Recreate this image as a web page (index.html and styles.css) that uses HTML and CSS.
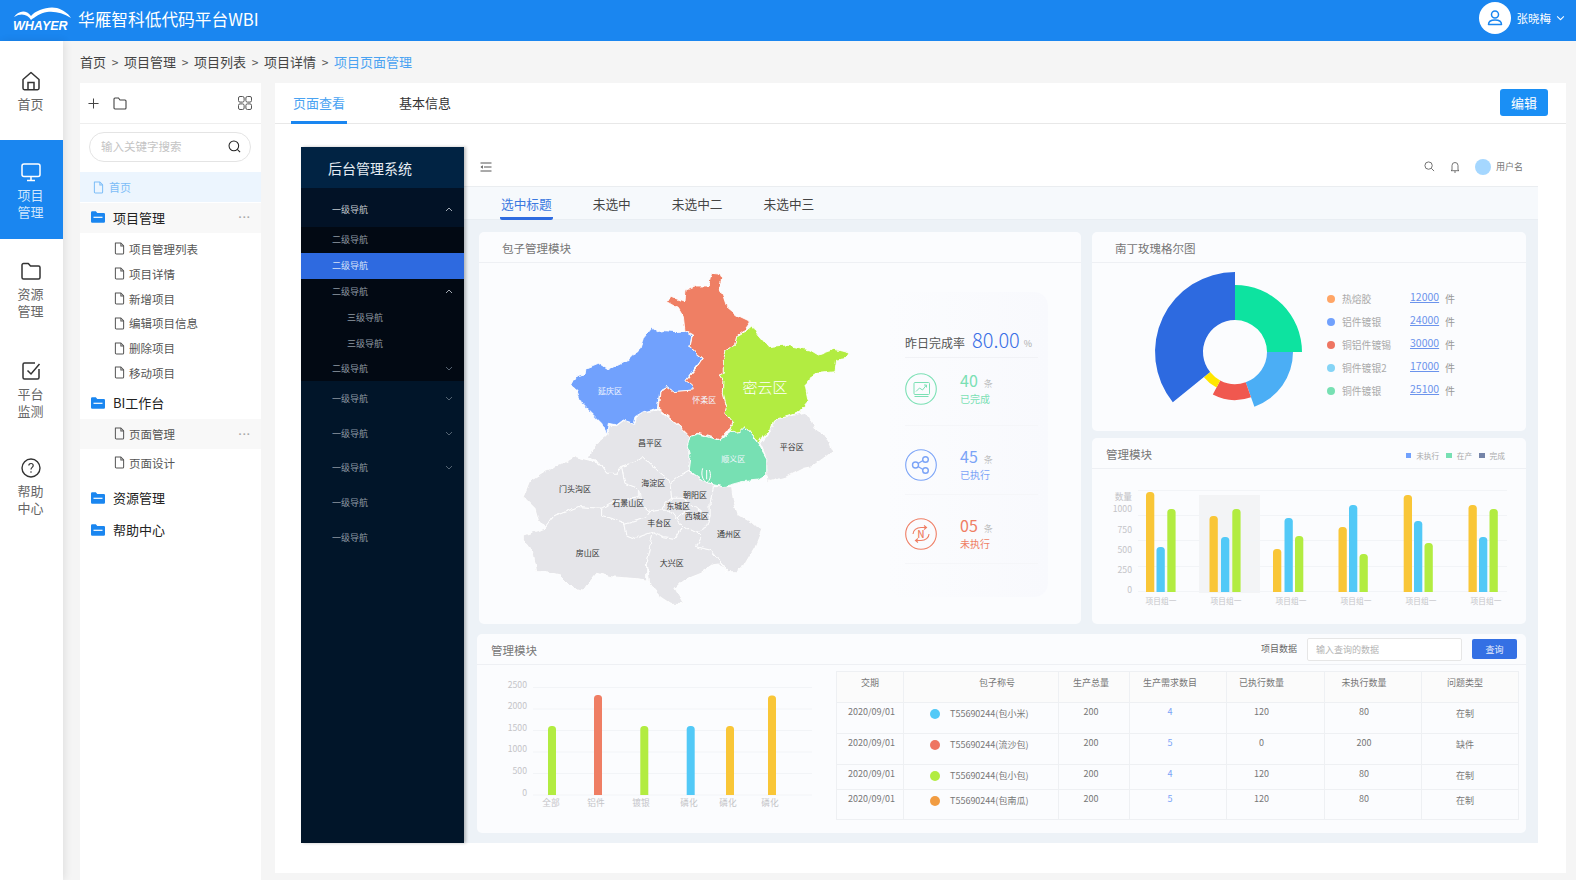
FILE: index.html
```html
<!DOCTYPE html>
<html lang="zh-CN">
<head>
<meta charset="utf-8">
<title>华雁智科低代码平台WBI</title>
<link rel="stylesheet" href="styles.css">
</head>
<body>
<svg class="sprite" aria-hidden="true">
  <defs>
    <symbol id="doc" viewBox="0 0 12 14"><path d="M1.5 1h6l3 3.2v7.6a1.2 1.2 0 0 1-1.2 1.2H2.7a1.2 1.2 0 0 1-1.2-1.2z" fill="none" stroke="currentColor" stroke-width="1.1" stroke-linejoin="round"/><path d="M7.5 1v3.2h3" fill="none" stroke="currentColor" stroke-width="1.1"/></symbol>
    <symbol id="bluefolder" viewBox="0 0 14 12"><path d="M0 1.5A1.2 1.2 0 0 1 1.2.3h3.6l1.5 1.6h6.5A1.2 1.2 0 0 1 14 3.1v7.4a1.2 1.2 0 0 1-1.2 1.2H1.2A1.2 1.2 0 0 1 0 10.500z" fill="#1a86f0"/><path d="M2.500 6.300h9" stroke="#fff" stroke-width="1.200"/></symbol>
    <symbol id="down" viewBox="0 0 8 5"><path d="M1 1l3 3 3-3" fill="none" stroke="currentColor" stroke-width="0.9"/></symbol>
    <symbol id="up" viewBox="0 0 8 5"><path d="M1 4l3-3 3 3" fill="none" stroke="currentColor" stroke-width="0.9"/></symbol>
    <filter id="rough" x="-5%" y="-5%" width="110%" height="110%" color-interpolation-filters="sRGB">
      <feTurbulence type="fractalNoise" baseFrequency="0.045" numOctaves="2" seed="4" result="n"/>
      <feDisplacementMap in="SourceGraphic" in2="n" scale="14" xChannelSelector="R" yChannelSelector="G"/>
    </filter>
  </defs>
</svg>

<div class="app">
  <header class="topbar">
    <div class="brand">
      <svg class="logo" viewBox="0 0 58 28" width="58" height="28">
        <path d="M1 10C5 4 13 2 18 9 23 3 35-1 44 1 50 3 55 6 58 11 50 6 42 4 34 5 27 6 22 10 18 13 15 8 9 5 1 10Z" fill="#fff"/>
        <text class="logo-text" x="0" y="23">WHAYER</text>
      </svg>
      <span class="brand-name">华雁智科低代码平台WBI</span>
    </div>
    <div class="user">
      <span class="user-avatar">
        <svg viewBox="0 0 20 20" width="20" height="20"><circle cx="10" cy="6.500" r="3.500" fill="none" stroke="#1a86f0" stroke-width="1.500"/><path d="M3.500 16.500c0-3 2.500-4.500 6.500-4.500s6.500 1.500 6.500 4.500z" fill="none" stroke="#1a86f0" stroke-width="1.500" stroke-linejoin="round"/></svg>
      </span>
      <span class="user-name">张晓梅</span>
      <svg class="user-caret" viewBox="0 0 8 5" width="9" height="6"><use href="#down"/></svg>
    </div>
  </header>

  <div class="below">
    <nav class="rail">
      <a class="rail-item rail-single">
        <svg viewBox="0 0 20 20" width="20" height="20"><path d="M10 1.500 2 8.500v8.800c0 .8.600 1.400 1.400 1.400h13.200c.8 0 1.400-.6 1.400-1.400V8.500z" fill="none" stroke="#333" stroke-width="1.500" stroke-linejoin="round"/><path d="M7 18.500v-7h6v7" fill="none" stroke="#333" stroke-width="1.500"/></svg>
        <span>首页</span>
      </a>
      <a class="rail-item rail-active">
        <svg viewBox="0 0 20 20" width="20" height="20"><rect x="1" y="2" width="18" height="12.500" rx="2" fill="none" stroke="#fff" stroke-width="1.500"/><path d="M10 14.500v3.500M6 18.500h8" stroke="#fff" stroke-width="1.500"/></svg>
        <span>项目<br>管理</span>
      </a>
      <a class="rail-item rail-tall">
        <svg viewBox="0 0 20 20" width="20" height="20"><path d="M1 4a1.500 1.500 0 0 1 1.500-1.500h4.800L9.500 5h8A1.500 1.500 0 0 1 19 6.500v10a1.500 1.500 0 0 1-1.500 1.500h-15A1.500 1.500 0 0 1 1 16.500z" fill="none" stroke="#333" stroke-width="1.500" stroke-linejoin="round"/></svg>
        <span>资源<br>管理</span>
      </a>
      <a class="rail-item">
        <svg viewBox="0 0 20 20" width="20" height="20"><path d="M18 8v8.500a1.500 1.500 0 0 1-1.500 1.500h-13A1.500 1.500 0 0 1 2 16.500v-13A1.500 1.500 0 0 1 3.500 2H14" fill="none" stroke="#333" stroke-width="1.500"/><path d="M6.500 9.500 10 13l8.500-10" fill="none" stroke="#333" stroke-width="1.500"/></svg>
        <span>平台<br>监测</span>
      </a>
      <a class="rail-item rail-help">
        <svg viewBox="0 0 20 20" width="20" height="20"><circle cx="10" cy="10" r="9" fill="none" stroke="#333" stroke-width="1.400"/><path d="M7.800 7.600c0-1.300 1-2.100 2.200-2.100s2.200.8 2.200 2c0 1.800-2.200 1.900-2.200 3.900" fill="none" stroke="#333" stroke-width="1.200"/><circle cx="10" cy="14" r=".8" fill="#333"/></svg>
        <span>帮助<br>中心</span>
      </a>
    </nav>

    <div class="content">
      <div class="crumbs">
        <span>首页</span><i>&gt;</i><span>项目管理</span><i>&gt;</i><span>项目列表</span><i>&gt;</i><span>项目详情</span><i>&gt;</i><span class="crumb-now">项目页面管理</span>
      </div>

      <div class="panels">
        <aside class="tree">
          <div class="tree-tools">
            <svg viewBox="0 0 12 12" width="11" height="11"><path d="M6 .5v11M.5 6h11" stroke="#444" stroke-width="1.100"/></svg>
            <svg class="tool-folder" viewBox="0 0 14 13" width="14" height="13"><path d="M1 2a1 1 0 0 1 1-1h3.500L7 3h5a1 1 0 0 1 1 1v7a1 1 0 0 1-1 1H2a1 1 0 0 1-1-1z" fill="none" stroke="#444" stroke-width="1.100"/></svg>
            <svg class="tool-grid" viewBox="0 0 14 14" width="14" height="14"><g fill="none" stroke="#555" stroke-width="1"><rect x=".5" y=".5" width="5.600" height="5.600" rx="1.500"/><rect x="7.900" y=".5" width="5.600" height="5.600" rx="1.500"/><rect x=".5" y="7.900" width="5.600" height="5.600" rx="1.500"/><rect x="7.900" y="7.900" width="5.600" height="5.600" rx="1.500"/></g></svg>
          </div>
          <div class="tree-search">
            <div class="pill">
              <span>输入关键字搜索</span>
              <svg viewBox="0 0 14 14" width="13" height="13"><circle cx="6.300" cy="6.300" r="5.200" fill="none" stroke="#222" stroke-width="1.100"/><path d="M10 10l3 3" stroke="#222" stroke-width="1.100"/></svg>
            </div>
          </div>
          <div class="t-home"><svg width="11" height="13"><use href="#doc"/></svg><span>首页</span></div>
          <div class="t-group t-group-on"><svg width="14" height="12"><use href="#bluefolder"/></svg><span>项目管理</span><b class="dots">···</b></div>
          <ul class="t-list">
            <li><svg width="11" height="13"><use href="#doc"/></svg>项目管理列表</li>
            <li><svg width="11" height="13"><use href="#doc"/></svg>项目详情</li>
            <li><svg width="11" height="13"><use href="#doc"/></svg>新增项目</li>
            <li><svg width="11" height="13"><use href="#doc"/></svg>编辑项目信息</li>
            <li><svg width="11" height="13"><use href="#doc"/></svg>删除项目</li>
            <li><svg width="11" height="13"><use href="#doc"/></svg>移动项目</li>
          </ul>
          <div class="t-group t-group-bi"><svg width="14" height="12"><use href="#bluefolder"/></svg><span>BI工作台</span></div>
          <div class="t-leaf t-leaf-on"><svg width="11" height="13"><use href="#doc"/></svg>页面管理<b class="dots">···</b></div>
          <div class="t-leaf"><svg width="11" height="13"><use href="#doc"/></svg>页面设计</div>
          <div class="t-group t-group-res"><svg width="14" height="12"><use href="#bluefolder"/></svg><span>资源管理</span></div>
          <div class="t-group t-group-help"><svg width="14" height="12"><use href="#bluefolder"/></svg><span>帮助中心</span></div>
        </aside>

        <main class="page">
          <div class="page-tabs">
            <a class="page-tab page-tab-on">页面查看</a>
            <a class="page-tab">基本信息</a>
            <button class="edit-btn">编辑</button>
          </div>

          <div class="frame">
            <div class="side">
              <div class="side-title">后台管理系统</div>
              <div class="side-row side-l1-open">一级导航<svg class="bright" width="8" height="5"><use href="#up"/></svg></div>
              <div class="side-sub">
                <div class="side-row side-l2">二级导航</div>
                <div class="side-row side-l2 side-on">二级导航</div>
                <div class="side-row side-l2">二级导航<svg class="bright" width="8" height="5"><use href="#up"/></svg></div>
                <div class="side-row side-l2 side-l3">三级导航</div>
                <div class="side-row side-l2 side-l3">三级导航</div>
                <div class="side-row side-l2">二级导航<svg width="8" height="5"><use href="#down"/></svg></div>
              </div>
              <div class="side-row side-l1">一级导航<svg width="8" height="5"><use href="#down"/></svg></div>
              <div class="side-row side-l1">一级导航<svg width="8" height="5"><use href="#down"/></svg></div>
              <div class="side-row side-l1">一级导航<svg width="8" height="5"><use href="#down"/></svg></div>
              <div class="side-row side-l1">一级导航</div>
              <div class="side-row side-l1">一级导航</div>
            </div>

            <div class="inner">
              <div class="inner-bar">
                <svg viewBox="0 0 12 10" width="12" height="10"><path d="M.5 1h11M4 5h7.500M.5 9h11" stroke="#555" stroke-width="1"/><path d="M2.800 3.300.5 5l2.300 1.700z" fill="#555"/></svg>
                <div class="inner-tools">
                  <svg viewBox="0 0 12 12" width="11" height="11"><circle cx="5" cy="5" r="4" fill="none" stroke="#666" stroke-width="1"/><path d="M8 8l3 3" stroke="#666"/></svg>
                  <svg class="bell" viewBox="0 0 10 12" width="10" height="12"><path d="M2 9V4.500a3 3 0 0 1 6 0V9l1 .7H1zM4 11h2" fill="none" stroke="#666" stroke-width=".9"/></svg>
                  <span class="mini-avatar"></span>
                  <span class="mini-name">用户名</span>
                </div>
              </div>
              <div class="inner-tabs">
                <a class="inner-tab inner-tab-on">选中标题</a>
                <a class="inner-tab">未选中</a>
                <a class="inner-tab">未选中二</a>
                <a class="inner-tab">未选中三</a>
              </div>

              <div class="dash">
                <section class="card card-map">
                  <h3 class="card-head card-head-wide">包子管理模块</h3>
                  <div class="map-body">
                    <svg class="map" viewBox="0 6 1080 1044" width="360" height="348">
                      <g filter="url(#rough)">
                        <polygon class="m-fill" points="300,640 600,640 650,800 560,900 300,900 200,800"/>
                        <g class="m-gray">
                          <polygon points="375,490 380,468 400,455 445,450 480,478 515,505 540,530 532,560 540,590 535,635 500,655 480,670 465,650 440,630 420,610 400,590 380,605 335,620 320,640 290,640 270,610 235,590 260,550 290,525 295,495 320,497 340,482"/>
                          <polygon points="40,710 60,660 110,630 150,615 195,590 235,600 270,612 290,640 320,640 335,620 345,670 385,685 385,710 300,730 275,745 205,740 130,770 105,805 85,780 75,745"/>
                          <polygon points="40,825 105,805 130,770 205,740 275,745 275,765 305,775 345,790 350,825 375,835 430,815 410,900 410,960 370,955 300,950 260,940 220,990 190,985 150,945 110,935 80,935 70,880 40,840"/>
                          <polygon points="430,815 460,830 495,835 510,810 540,805 560,815 575,830 560,860 600,870 625,900 650,935 625,912 605,915 570,940 520,960 495,985 520,1030 480,1030 450,1010 420,975 410,900"/>
                          <polygon points="640,680 665,680 670,720 685,765 730,790 755,810 735,860 700,920 680,935 655,935 625,900 600,870 560,860 575,830 560,815 590,800 600,765 600,730 610,680"/>
                          <polygon points="335,620 380,605 400,590 420,610 440,630 465,650 480,670 485,715 465,730 455,750 420,755 395,735 385,685 345,670"/>
                          <polygon points="480,670 500,655 535,635 578,660 605,672 610,680 600,730 600,765 570,755 545,735 520,715 485,715"/>
                          <polygon points="300,730 385,710 395,735 420,755 410,770 345,790 305,775 275,765 275,745"/>
                          <polygon points="345,790 410,770 420,755 455,750 480,750 500,775 520,800 510,810 495,835 460,830 430,815 375,835 350,825"/>
                          <polygon points="485,715 520,715 540,750 510,765 500,775 480,750 455,750 465,730"/>
                          <polygon points="520,715 545,735 570,755 600,765 590,800 560,815 540,805 510,810 520,800 500,775 510,765 540,750"/>
                          <polygon points="790,480 830,470 880,458 900,470 920,515 945,525 968,575 905,620 880,625 830,650 775,665 770,645 770,595 750,550 785,505"/>
                        </g>
                        <polygon class="m-part m-blue" points="425,205 440,215 460,212 500,215 525,212 545,225 540,262 578,295 555,325 528,362 550,378 550,390 490,395 470,380 450,390 442,445 400,455 375,470 370,490 340,480 320,495 295,490 290,520 275,490 250,465 215,430 200,390 185,378 200,350 225,345 228,325 265,310 295,330 355,300 390,265 400,235"/>
                        <polygon class="m-part m-red" points="605,40 625,42 635,60 628,85 640,110 650,140 680,165 722,185 700,215 680,230 675,255 648,270 640,310 640,340 628,345 642,365 640,400 650,440 645,460 668,488 655,510 630,540 600,530 565,520 540,530 515,505 480,475 445,445 450,395 470,380 490,395 550,390 545,375 528,362 560,325 580,295 550,270 540,260 548,225 525,212 520,170 505,145 470,125 480,108 525,125 528,90 560,78 595,78"/>
                        <polygon class="m-part m-green" points="728,195 745,225 775,260 830,255 900,270 925,285 975,268 1020,280 1010,295 980,300 975,335 925,340 895,360 885,375 895,425 870,455 830,470 790,480 785,505 760,525 745,550 725,525 705,500 690,515 660,518 668,488 645,460 650,440 640,400 642,365 628,345 640,340 640,300 648,270 675,255 680,230 705,215"/>
                        <polygon class="m-part m-teal" points="540,530 565,522 600,532 630,542 660,518 690,515 705,500 725,525 745,552 770,595 770,645 745,660 695,665 640,680 605,672 578,660 535,630 540,590 532,560"/>
                      </g>
                      <path d="M578 625c-6 20 0 35 12 43 12-6 14-25 8-38M590 630v28" fill="none" stroke="#fff" stroke-width="3"/>
                      <g class="m-light">
                        <text x="300" y="392">延庆区</text><text x="583" y="418">怀柔区</text><text x="670" y="595">顺义区</text>
                        <text class="m-big" x="765" y="380">密云区</text>
                      </g>
                      <g class="m-dark">
                        <text x="420" y="547">昌平区</text><text x="845" y="560">平谷区</text><text x="195" y="685">门头沟区</text><text x="430" y="668">海淀区</text><text x="555" y="703">朝阳区</text><text x="355" y="728">石景山区</text><text x="505" y="735">东城区</text><text x="560" y="765">西城区</text><text x="448" y="788">丰台区</text><text x="657" y="820">通州区</text><text x="233" y="878">房山区</text><text x="485" y="908">大兴区</text>
                      </g>
                    </svg>
                    <div class="stats">
                      <div class="stat-head"><span class="stat-label">昨日完成率</span><span class="stat-rate">80.00</span><span class="stat-pct">%</span></div>
                      <div class="stat-row stat-first stat-green">
                        <svg viewBox="0 0 32 32" width="32" height="32"><g fill="none" stroke="#7be0b4"><circle cx="16" cy="16" r="15.300" stroke-width="1.100"/><rect x="9" y="9.500" width="15.500" height="12" rx="1"/><path d="M11 18.500l3.500-3.500 3 2 4-5M19 12h2.500v2.500"/><path d="M9.500 23.500h14"/></g></svg>
                        <div><div class="stat-num">40<em>条</em></div><div class="stat-txt">已完成</div></div>
                      </div>
                      <div class="stat-row stat-blue">
                        <svg viewBox="0 0 32 32" width="32" height="32"><g fill="none" stroke="#7aa3f7"><circle cx="16" cy="16" r="15.300" stroke-width="1.100"/><g stroke-width="1.400"><circle cx="10.500" cy="16" r="3"/><circle cx="20.500" cy="10.500" r="2.800"/><circle cx="20.500" cy="21.500" r="2.800"/><path d="M13 14.500l5-3M13 17.500l5 3"/></g></g></svg>
                        <div><div class="stat-num">45<em>条</em></div><div class="stat-txt">已执行</div></div>
                      </div>
                      <div class="stat-row stat-red">
                        <svg viewBox="0 0 32 32" width="32" height="32"><g fill="none" stroke="#ef7e64"><circle cx="16" cy="16" r="15.300" stroke-width="1.100"/><path d="M8 16a8 6.500 0 0 1 8-6.500h5M24 16a8 6.500 0 0 1-8 6.500h-5" stroke-width="1.100"/><path d="M19 7.500l2.500 2-2.500 2M13 20.500l-2.500 2 2.500 2" stroke-width="1.100"/></g><text class="stat-n" x="16" y="19.500">N</text></svg>
                        <div><div class="stat-num">05<em>条</em></div><div class="stat-txt">未执行</div></div>
                      </div>
                    </div>
                  </div>
                </section>

                <section class="card card-rose">
                  <h3 class="card-head card-head-wide">南丁玫瑰格尔图</h3>
                  <div class="rose-body">
                    <svg viewBox="1092 263 235 167" width="235" height="167">
                      <path fill="#0de3a0" d="M1235 320V285A67 67 0 0 1 1302 352H1267A32 32 0 0 0 1235 320Z"/>
                      <path fill="#4baef5" d="M1267 352H1293A58 58 0 0 1 1254.400 406.700L1245.700 382.200A32 32 0 0 0 1267 352Z"/>
                      <path fill="#f0584f" d="M1245.700 382.200L1251 397.200A48 48 0 0 1 1212.800 394.600L1220.200 380.400A32 32 0 0 0 1245.700 382.200Z"/>
                      <path fill="#ffe600" d="M1220.200 380.400L1216.500 387.500A40 40 0 0 1 1203.900 377.200L1210.100 372.100A32 32 0 0 0 1220.200 380.400Z"/>
                      <path fill="#2d6ae0" d="M1210.100 372.100L1172.800 402.300A80 80 0 0 1 1235 272V320A32 32 0 0 0 1210.100 372.100Z"/>
                    </svg>
                    <ul class="legend">
                      <li><i class="dot d-orange"></i><span>热熔胶</span><a>12000</a><em>件</em></li>
                      <li><i class="dot d-blue"></i><span>铝件镀银</span><a>24000</a><em>件</em></li>
                      <li><i class="dot d-red"></i><span>铜铝件镀锡</span><a>30000</a><em>件</em></li>
                      <li><i class="dot d-sky"></i><span>铜件镀银2</span><a>17000</a><em>件</em></li>
                      <li><i class="dot d-teal"></i><span>铜件镀银</span><a>25100</a><em>件</em></li>
                    </ul>
                  </div>
                </section>

                <section class="card card-bars">
                  <div class="card-head card-head-flex">
                    <h3>管理模块</h3>
                    <div class="bar-legend">
                      <i class="sq sq-blue"></i><span>未执行</span><i class="sq sq-teal"></i><span>在产</span><i class="sq sq-navy"></i><span>完成</span>
                    </div>
                  </div>
                  <svg class="chart" viewBox="1092 470 434 154" width="434" height="154">
                    <defs><clipPath id="barsclip"><rect x="1092" y="470" width="434" height="123"/></clipPath></defs>
                    <rect x="1199" y="496" width="61" height="98" fill="#f3f4f6"/>
                    <g class="grid"><path d="M1138 491.500H1507M1138 516.500H1507M1138 541.500H1507M1138 567.500H1507M1138 592.500H1507"/></g>
                    <g class="axis axis-end">
                      <text x="1132" y="501">数量</text><text x="1132" y="513">1000</text><text x="1132" y="534">750</text><text x="1132" y="554">500</text><text x="1132" y="574">250</text><text x="1132" y="594">0</text>
                    </g>
                    <g clip-path="url(#barsclip)">
                      <g fill="#f9c637"><rect x="1146" y="493" width="8.300" height="110" rx="3.500"/><rect x="1209.500" y="517" width="8.300" height="90" rx="3.500"/><rect x="1273" y="550" width="8.300" height="60" rx="3.500"/><rect x="1338.500" y="528" width="8.300" height="80" rx="3.500"/><rect x="1403.700" y="496" width="8.300" height="110" rx="3.500"/><rect x="1468.500" y="506" width="8.300" height="100" rx="3.500"/></g>
                      <g fill="#52c9f7"><rect x="1156.500" y="548" width="8.300" height="60" rx="3.500"/><rect x="1221" y="538" width="8.300" height="70" rx="3.500"/><rect x="1284.500" y="519" width="8.300" height="90" rx="3.500"/><rect x="1349" y="506" width="8.300" height="100" rx="3.500"/><rect x="1414" y="522" width="8.300" height="90" rx="3.500"/><rect x="1479" y="538" width="8.300" height="70" rx="3.500"/></g>
                      <g fill="#b2ec41"><rect x="1167.300" y="510" width="8.300" height="100" rx="3.500"/><rect x="1232.300" y="510" width="8.300" height="100" rx="3.500"/><rect x="1295" y="537" width="8.300" height="70" rx="3.500"/><rect x="1359.500" y="555" width="8.300" height="60" rx="3.500"/><rect x="1424.500" y="544" width="8.300" height="60" rx="3.500"/><rect x="1489.500" y="510" width="8.300" height="100" rx="3.500"/></g>
                    </g>
                    <g class="axis axis-mid axis-small">
                      <text x="1161" y="605">项目组一</text><text x="1226" y="605">项目组一</text><text x="1291" y="605">项目组一</text><text x="1356" y="605">项目组一</text><text x="1421" y="605">项目组一</text><text x="1486" y="605">项目组一</text>
                    </g>
                  </svg>
                </section>

                <section class="card card-table">
                  <div class="card-head card-head-flex card-head-low">
                    <h3>管理模块</h3>
                    <div class="query">
                      <label>项目数据</label>
                      <input class="query-input" placeholder="输入查询的数据">
                      <button class="query-btn">查询</button>
                    </div>
                  </div>
                  <div class="table-body">
                    <svg class="chart" viewBox="479 665 350 171" width="350" height="171">
                      <defs><clipPath id="lowclip"><rect x="479" y="665" width="350" height="130"/></clipPath></defs>
                      <g class="grid"><path d="M533 687.500H812M533 709H812M533 730.500H812M533 752H812M533 773.500H812M533 795H812"/></g>
                      <g class="axis axis-end">
                        <text x="527" y="688">2500</text><text x="527" y="709">2000</text><text x="527" y="731">1500</text><text x="527" y="752">1000</text><text x="527" y="774">500</text><text x="527" y="796">0</text>
                      </g>
                      <g clip-path="url(#lowclip)">
                        <rect x="548" y="726" width="8" height="75" rx="3.500" fill="#b2ec41"/>
                        <rect x="594" y="695" width="8" height="105" rx="3.500" fill="#ef7e64"/>
                        <rect x="640.300" y="726" width="8" height="75" rx="3.500" fill="#b2ec41"/>
                        <rect x="686.700" y="726" width="8" height="75" rx="3.500" fill="#52c9f7"/>
                        <rect x="726" y="726" width="8" height="75" rx="3.500" fill="#f9c637"/>
                        <rect x="768" y="695.500" width="8" height="105" rx="3.500" fill="#f9c637"/>
                      </g>
                      <g class="axis axis-mid">
                        <text x="551" y="806">全部</text><text x="596" y="806">铝件</text><text x="641" y="806">镀银</text><text x="689" y="806">磷化</text><text x="728" y="806">磷化</text><text x="770" y="806">磷化</text>
                      </g>
                    </svg>
                    <table class="data">
                      <colgroup><col class="w1"><col class="w2"><col class="w3"><col class="w4"><col class="w5"><col class="w6"><col class="w7"></colgroup>
                      <thead>
                        <tr><th>交期</th><th class="th-name">包子称号</th><th class="c3">生产总量</th><th class="c4">生产需求数目</th><th class="c5">已执行数量</th><th class="c6">未执行数量</th><th class="c7">问题类型</th></tr>
                      </thead>
                      <tbody>
                        <tr class="r31"><td class="td-date">2020/09/01</td><td class="td-name"><i class="tdot td-sky"></i>T55690244(包小米)</td><td class="c3">200</td><td class="c4 num-link">4</td><td class="c5">120</td><td class="c6">80</td><td class="c7 td-low">在制</td></tr>
                        <tr class="r31"><td class="td-date">2020/09/01</td><td class="td-name"><i class="tdot td-red"></i>T55690244(流沙包)</td><td class="c3">200</td><td class="c4 num-link">5</td><td class="c5">0</td><td class="c6">200</td><td class="c7 td-low">缺件</td></tr>
                        <tr class="r25"><td class="td-date">2020/09/01</td><td class="td-name"><i class="tdot td-lime"></i>T55690244(包小包)</td><td class="c3">200</td><td class="c4 num-link">4</td><td class="c5">120</td><td class="c6">80</td><td class="c7 td-low">在制</td></tr>
                        <tr class="r30"><td class="td-date">2020/09/01</td><td class="td-name"><i class="tdot td-orange"></i>T55690244(包南瓜)</td><td class="c3">200</td><td class="c4 num-link">5</td><td class="c5">120</td><td class="c6">80</td><td class="c7 td-low">在制</td></tr>
                      </tbody>
                    </table>
                  </div>
                </section>
              </div>
            </div>
          </div>
        </main>
      </div>
    </div>
  </div>
</div>
</body>
</html>
```

FILE: styles.css
```css
* { box-sizing: border-box; }
html, body { margin: 0; height: 100%; }
body {
  width: 1576px;
  height: 880px;
  overflow: hidden;
  background: #f5f5f5;
  font-family: "Noto Sans CJK SC", "Noto Sans", sans-serif;
  color: #333;
}
h3 { margin: 0; font-weight: 400; }
ul { margin: 0; padding: 0; list-style: none; }
i, em { font-style: normal; }
a { text-decoration: none; }
svg { display: block; flex: none; }
.sprite { position: absolute; width: 0; height: 0; }

.app { display: flex; flex-direction: column; height: 880px; }

/* top bar */
.topbar {
  flex: none;
  height: 41px;
  background: #1a86f0;
  display: flex;
  align-items: center;
  justify-content: space-between;
  padding: 0 11px 0 13px;
  color: #fff;
}
.brand { display: flex; align-items: center; gap: 7px; }
.logo { margin-top: 1px; }
.logo-text { font: italic 700 12.5px "Liberation Sans", sans-serif; fill: #fff; }
.brand-name { font-size: 16.700px; line-height: 38px; margin-top: -3px; }
.user { display: flex; align-items: center; margin-top: -5px; }
.user-avatar {
  width: 32px; height: 32px; border-radius: 50%; background: #fff;
  display: flex; align-items: center; justify-content: center;
}
.user-name { margin-left: 6px; font-size: 11.500px; }
.user-caret { margin-left: 5px; color: #fff; }

.below { flex: 1; display: flex; min-height: 0; }

/* icon rail */
.rail {
  flex: none;
  width: 63px;
  background: #fff;
  box-shadow: 2px 0 8px rgba(0, 0, 0, .09);
  position: relative;
}
.rail-item {
  display: flex;
  flex-direction: column;
  align-items: center;
  height: 99px;
  padding: 22px 2px 0 0;
  gap: 5px;
  font-size: 13px;
  line-height: 16.500px;
  color: #666;
  text-align: center;
}
.rail-single { height: 99px; padding-top: 30px; }
.rail-tall { height: 100px; }
.rail-help { padding-top: 20px; }
.rail-active { background: #1a86f0; color: #cfe6fd; }

/* content */
.content { flex: 1; min-width: 0; padding: 0 10px 0 17px; }
.crumbs {
  height: 42px;
  padding-bottom: 2px;
  display: flex;
  align-items: center;
  font-size: 13px;
  color: #444;
}
.crumbs i { width: 18px; text-align: center; font-size: 12px; color: #555; }
.crumb-now { color: #4aa3f2; }
.panels { display: flex; gap: 14px; height: 797px; }

/* tree */
.tree { flex: none; width: 181px; height: 797px; background: #fff; }
.tree-tools {
  height: 41px;
  border-bottom: 1px solid #eee;
  display: flex;
  align-items: center;
  padding: 0 9px 0 8px;
}
.tool-folder { margin-left: 14px; }
.tool-grid { margin-left: auto; }
.tree-search { padding: 8px 10px 10px 9px; height: 48px; }
.pill {
  height: 30px;
  border: 1px solid #e4e4e4;
  border-radius: 15px;
  display: flex;
  align-items: center;
  justify-content: space-between;
  padding: 0 9px 2px 11px;
  font-size: 11.500px;
  color: #c4c4c4;
}
.t-home {
  height: 30px;
  background: #ecf5fe;
  color: #7cbdf7;
  font-size: 11px;
  display: flex;
  align-items: center;
  gap: 5px;
  padding-left: 13px;
}
.t-group {
  height: 30px;
  display: flex;
  align-items: center;
  gap: 8px;
  padding: 0 0 2px 11px;
  font-size: 13px;
  color: #222;
}
.t-group-on { margin-top: 1px; background: #f8f8f8; }
.t-group-bi { margin-top: 3.600px; }
.t-group-res { margin-top: 7px; }
.t-group-help { margin-top: 2px; }
.dots {
  margin-left: auto;
  margin-right: 10px;
  font: 700 11px "Liberation Sans", sans-serif;
  letter-spacing: .5px;
  color: #aaa;
}
.t-list { margin-top: 3.600px; }
.t-list li, .t-leaf {
  display: flex;
  align-items: center;
  gap: 4px;
  padding-left: 34px;
  font-size: 11.500px;
  color: #555;
}
.t-list li { height: 24.800px; }
.t-leaf { height: 28px; }
.t-leaf-on { height: 30px; background: #f8f8f8; }

/* page */
.page { flex: none; width: 1291px; height: 790px; background: #fff; }
.page-tabs {
  height: 41px;
  border-bottom: 1px solid #e8e8e8;
  display: flex;
  align-items: stretch;
  gap: 50px;
  padding: 0 18px 0 16px;
}
.page-tab {
  padding: 0 2px;
  font-size: 13px;
  line-height: 39px;
  color: #333;
  height: 41px;
}
.page-tab-on { color: #4aa3f2; border-bottom: 3px solid #1a86f0; }
.edit-btn {
  margin: 6px 0 6px auto;
  width: 48px;
  height: 27px;
  border: 0;
  border-radius: 3px;
  background: #1a8ff5;
  color: #fff;
  font: 400 13px "Noto Sans CJK SC", sans-serif;
}

/* inner frame */
.frame { display: flex; height: 696px; margin: 23px 28px 0 26px; }
.side {
  flex: none;
  width: 163px;
  background: #011529;
  color: #8f99a3;
  box-shadow: 2px 0 3px rgba(0, 0, 0, .25);
  position: relative;
  font-size: 9px;
}
.side-title {
  height: 41px;
  background: #012343;
  color: #e6edf3;
  font-size: 14px;
  line-height: 42px;
  padding-left: 27px;
}
.side-row {
  display: flex;
  align-items: center;
  justify-content: space-between;
  padding: 0 11px 0 31px;
}
.side-row svg { color: #5d6c7a; }
.side-row svg.bright { color: #b5bdc5; }
.side-l1-open { height: 39px; padding-top: 4px; background: #021226; color: #c4cad0; }
.side-l1 { height: 34.700px; }
.side-sub { background: #020913; height: 154px; }
.side-l2 { height: 25.800px; }
.side-l3 { padding-left: 46px; }
.side-on { background: #2e6ae0; color: #d8e3f8; }

.inner { flex: 1; min-width: 0; display: flex; flex-direction: column; background: #edf2f7; }
.inner-bar {
  flex: none;
  height: 40px;
  background: #fff;
  display: flex;
  align-items: center;
  justify-content: space-between;
  padding: 0 15px 0 16px;
  border-bottom: 1px solid #eaedf0;
}
.inner-tools { display: flex; align-items: center; }
.bell { margin-left: 15px; }
.mini-avatar { width: 16px; height: 16px; margin-left: 15px; border-radius: 50%; background: #a5d7ff; }
.mini-name { margin-left: 5px; font-size: 9px; color: #777; }
.inner-tabs {
  flex: none;
  height: 33px;
  background: #f6f9fc;
  border-bottom: 1px solid #e9eef3;
  display: flex;
  gap: 39px;
  padding-left: 36px;
}
.inner-tab {
  padding: 0 1px;
  font-size: 12.700px;
  line-height: 34px;
  color: #444;
  height: 33px;
}
.inner-tab-on { color: #3a78e0; border-bottom: 3px solid #2e6be0; border-radius: 0 0 2px 2px; }

.dash {
  flex: 1;
  display: grid;
  grid-template-columns: 602px 434px;
  grid-template-rows: 199px 186px 202px;
  column-gap: 11px;
  row-gap: 7px;
  padding: 12px 12px 0 15px;
  align-content: start;
}
.card { background: #fbfcfe; border-radius: 5px; min-width: 0; overflow: hidden; }
.card-map { grid-row: 1 / span 2; }
.card-table { grid-column: 1 / span 2; margin: 3px 0 0 -2px; }
.card-head {
  height: 31px;
  border-bottom: 1px solid #eef0f4;
  font-size: 11.500px;
  line-height: 32px;
  color: #777;
}
.card-head-wide { padding-left: 23px; }
.card-head-flex {
  display: flex;
  align-items: center;
  justify-content: space-between;
  padding: 0 14px;
}
.card-head-low { padding: 0 9px 0 14px; }
.card-head-flex h3 { font-size: 11.500px; color: #777; margin-top: 1px; }

/* map */
.map-body { display: flex; align-items: flex-start; }
.map { margin: -1px 0 0 31px; }
.m-fill { fill: #e5e5e9; }
.m-gray polygon { fill: #e5e5e9; stroke: #fff; stroke-width: 2.500; stroke-linejoin: round; }
.m-part { stroke: #fff; stroke-width: 2.500; stroke-linejoin: round; }
.m-blue { fill: #71a1fd; }
.m-red { fill: #ef7f64; }
.m-green { fill: #b2ec41; }
.m-teal { fill: #77e0b3; }
.map text { text-anchor: middle; font-size: 24px; dominant-baseline: central; }
.m-light text { fill: #f2f6ff; }
.map .m-big { font-size: 45px; fill: #fff; font-weight: 300; }
.m-dark text { fill: #333; }

.stats {
  flex: none;
  width: 161px;
  height: 305px;
  margin: 29px 0 0 17px;
  padding: 0 10px 0 18px;
  border-radius: 14px;
  background: linear-gradient(90deg, #fbfcfe, #f8f9fd);
}
.stat-head {
  height: 66px;
  border-bottom: 1px solid #f1f2f6;
  display: flex;
  align-items: flex-end;
  padding-bottom: 6px;
  white-space: nowrap;
}
.stat-label { font-size: 12px; color: #555; line-height: 17px; }
.stat-rate { margin-left: 7px; font-size: 20px; line-height: 22px; color: #3b70e6; font-weight: 300; }
.stat-pct { margin-left: 4px; font-size: 9px; line-height: 14px; color: #aaa; }
.stat-row {
  display: flex;
  align-items: flex-start;
  gap: 23px;
  height: 69px;
  padding-top: 23px;
  border-bottom: 1px solid #f5f6f9;
}
.stat-first { height: 68px; padding-top: 15px; }
.stat-num { font-size: 16px; line-height: 15px; white-space: nowrap; }
.stat-num em { margin-left: 6px; font-size: 9px; color: #aaa; font-weight: 300; }
.stat-txt { margin-top: 1px; font-size: 10px; line-height: 14px; }
.stat-green { color: #7be0b4; }
.stat-blue { color: #7aa3f7; }
.stat-red { color: #ef7e64; }
.stat-n { font-size: 10px; text-anchor: middle; fill: #ef7e64; font-weight: 500; }

/* rose */
.rose-body { display: flex; align-items: flex-start; }
.legend { margin-top: 24px; }
.legend li {
  display: grid;
  grid-template-columns: 15px 68px 28px auto;
  align-items: center;
  height: 23px;
  font-size: 9.800px;
  color: #aaa;
}
.legend a {
  font-size: 10.500px;
  line-height: 12px;
  color: #6b93ec;
  text-decoration: underline;
  margin-bottom: 3px;
  white-space: nowrap;
}
.legend em { margin-left: 7px; font-size: 10px; color: #999; }
.dot { width: 8px; height: 8px; border-radius: 50%; }
.d-orange { background: #ffa566; }
.d-blue { background: #71a1fd; }
.d-red { background: #ee7562; }
.d-sky { background: #85d4f6; }
.d-teal { background: #77e0b3; }

/* chart text */
.grid path { fill: none; stroke: #f2f4f7; stroke-width: 1; }
.axis text { font-size: 8.700px; fill: #c4c4c8; }
.axis-end text { text-anchor: end; }
.axis-mid text { text-anchor: middle; }
.axis-small text { font-size: 7.700px; }

.bar-legend { display: flex; align-items: center; font-size: 7.700px; color: #aaa; padding: 5px 7px 0 0; }
.sq { width: 5.500px; height: 5.500px; margin-right: 5px; }
.bar-legend span { margin-right: 7px; }
.bar-legend span:last-child { margin-right: 0; }
.sq-blue { background: #71a1fd; }
.sq-teal { background: #77e0b3; }
.sq-navy { background: #7484a8; }

/* table card */
.query { display: flex; align-items: center; gap: 10px; font-size: 9px; color: #666; }
.query-input {
  width: 155px;
  height: 23px;
  border: 1px solid #e6e6e6;
  border-radius: 2px;
  padding: 0 8px;
  background: #fff;
  font: 400 9px "Noto Sans CJK SC", sans-serif;
}
.query-input::placeholder { color: #b4b4b4; }
.query-btn {
  width: 45px;
  height: 20px;
  border: 0;
  border-radius: 2px;
  background: #3470e4;
  color: #e6eefc;
  font: 400 9px "Noto Sans CJK SC", sans-serif;
}
.table-body { display: flex; align-items: flex-start; padding-left: 2px; }
.data {
  margin: 6px 0 0 7px;
  width: 682px;
  table-layout: fixed;
  border-collapse: collapse;
  border: 1px solid #eceef1;
  font-size: 9px;
  color: #777;
}
.data th {
  height: 31px;
  padding: 0 0 9px;
  background: #fbfbfb;
  font-weight: 400;
  text-align: center;
  color: #777;
}
.data th, .data td { border: 1px solid #eef0f3; }
.data td {
  padding: 3px 0 0;
  vertical-align: top;
  text-align: center;
  line-height: 12px;
}
.w1 { width: 67px; }
.w2 { width: 155px; }
.w3 { width: 71px; }
.w4 { width: 97px; }
.w5 { width: 98px; }
.w6 { width: 97px; }
.w7 { width: 97px; }
.r31 td { height: 31px; }
.r25 td { height: 25px; }
.r30 td { height: 30px; }
.data .th-name { padding-left: 32px; }
.data .td-date { padding-left: 3px; }
.data .c3 { padding-right: 6px; }
.data .c4 { padding-right: 16px; }
.data .c5 { padding-right: 28px; }
.data .c6 { padding-right: 18px; }
.data .c7 { padding-right: 10px; }
.data .td-low { padding-top: 5px; }
.data .td-name {
  padding-top: 5px;
  padding-left: 26px;
  text-align: left;
  white-space: nowrap;
}
.tdot { display: inline-block; vertical-align: -2px; width: 10px; height: 10px; margin-right: 10px; border-radius: 50%; }
.td-sky { background: #52c9f7; }
.td-red { background: #ee7562; }
.td-lime { background: #b2ec41; }
.td-orange { background: #f19c42; }
.data .num-link { color: #7aa3f7; }
```
